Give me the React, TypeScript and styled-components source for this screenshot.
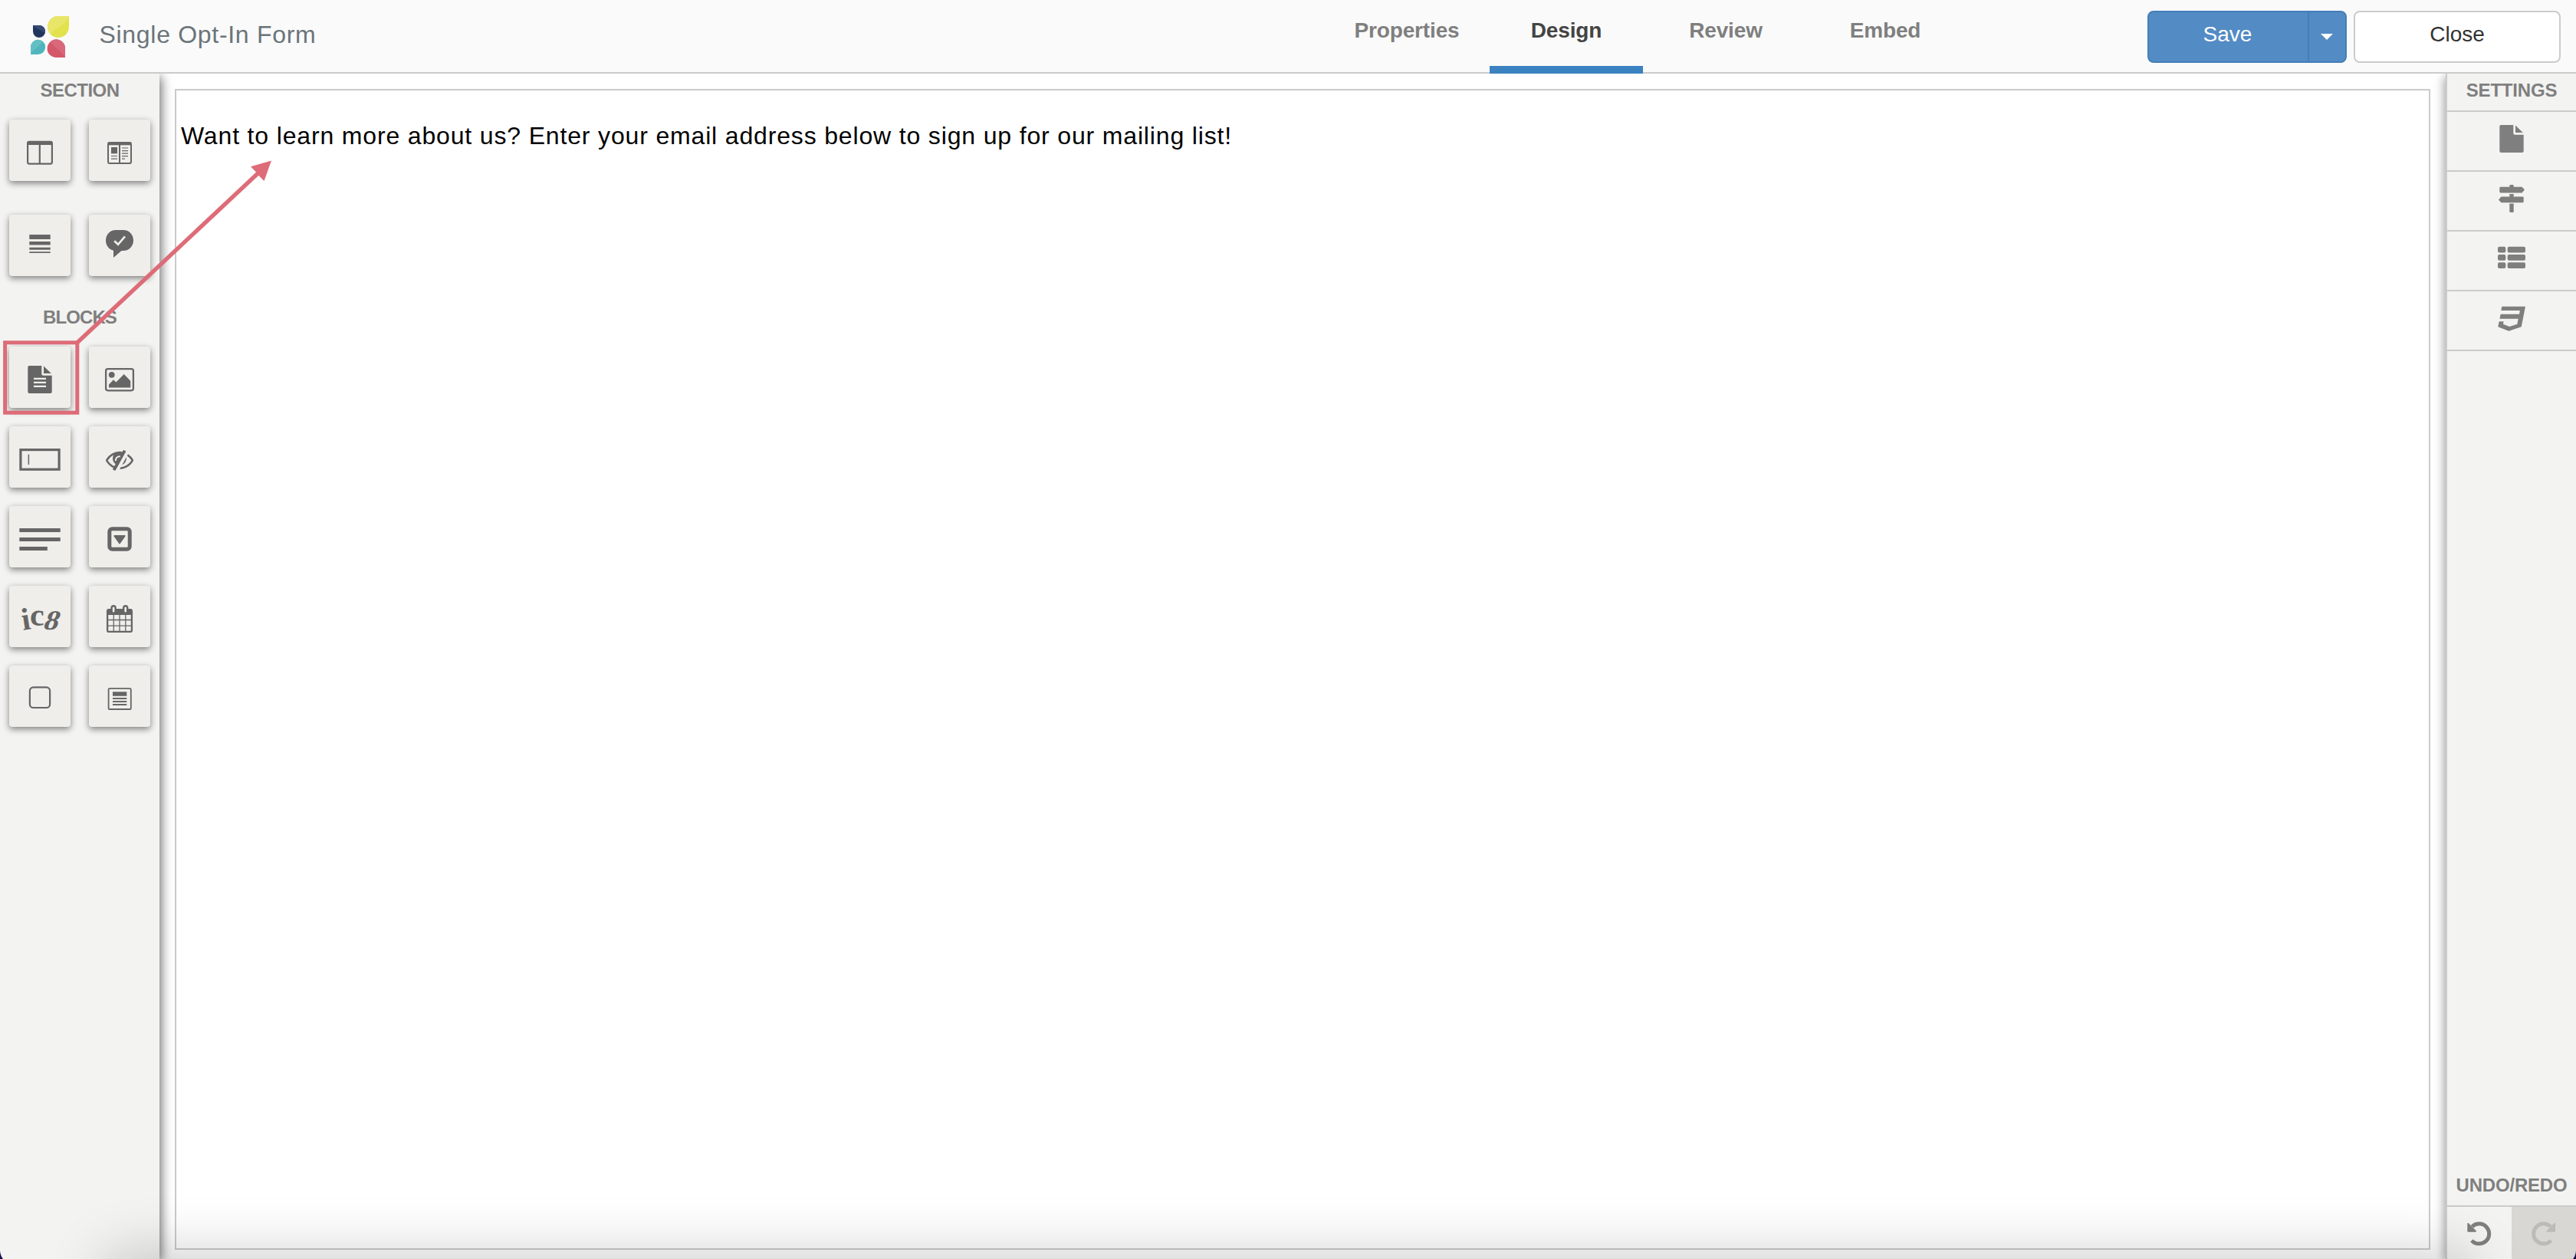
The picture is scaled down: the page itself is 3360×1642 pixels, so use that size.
import React from "react";
import styled, { createGlobalStyle } from "styled-components";

const GlobalStyle = createGlobalStyle`
  * { box-sizing: border-box; }
  html, body { margin: 0; padding: 0; }
  body {
    font-family: "Liberation Sans", Helvetica, Arial, sans-serif;
    background: #fff;
    overflow: hidden;
  }
  button { font-family: inherit; margin: 0; padding: 0; }
`;

const INK = "#666666";
const TILE = "#efeeea";

const Page = styled.div`
  position: relative;
  display: flex;
  flex-direction: column;
  height: 1642px;
  overflow: hidden;
`;

const Header = styled.header`
  display: grid;
  grid-template-columns: 1735px 1fr auto;
  height: 96px;
  flex: none;
  background: #fafafa;
  box-shadow: inset 0 -2px 0 #cbcbcb;
`;

const Brand = styled.div`
  display: flex;
  align-items: flex-start;
  padding: 20px 0 0 38px;
`;

const Title = styled.h1`
  margin: 7px 0 0 37.5px;
  font-size: 32px;
  line-height: 37px;
  font-weight: 400;
  letter-spacing: 0.7px;
  color: #6b7479;
`;

const Tabs = styled.nav`
  display: flex;
  gap: 8px;
`;

const Tab = styled.a<{ $active?: boolean }>`
  width: 200px;
  padding-top: 24px;
  text-align: center;
  font-size: 28px;
  line-height: 32px;
  font-weight: 700;
  letter-spacing: -0.15px;
  color: ${(p) => (p.$active ? "#444444" : "#7f7f7f")};
  border-bottom: 10px solid ${(p) => (p.$active ? "#3a82c0" : "transparent")};
`;

const Actions = styled.div`
  display: flex;
  gap: 9px;
  padding: 14px 20px 0 0;
`;

const SaveGroup = styled.div`
  display: flex;
  width: 260px;
  height: 68px;
  border: 2px solid #457eb9;
  border-radius: 8px;
  background: #538bc4;
  overflow: hidden;
`;

const SaveButton = styled.button`
  width: 207px;
  padding: 0 2px 6px 0;
  border: 0;
  background: transparent;
  color: #fff;
  font-size: 28px;
`;

const SaveMenu = styled.button`
  flex: 1;
  display: flex;
  align-items: center;
  justify-content: center;
  border: 0;
  border-left: 2px solid #457eb9;
  background: transparent;
`;

const Caret = styled.span`
  border: 8px solid transparent;
  border-top-color: #fff;
  border-bottom: 0;
  margin: -1px 2px 0 0;
`;

const CloseButton = styled.button`
  width: 270px;
  height: 68px;
  padding-bottom: 6px;
  border: 2px solid #cbcbcb;
  border-radius: 8px;
  background: #fff;
  color: #333;
  font-size: 28px;
`;

const Body = styled.div`
  display: flex;
  flex: 1;
  min-height: 0;
`;

const Sidebar = styled.aside`
  width: 208px;
  flex: none;
  background: #f3f3f1;
  box-shadow: 2px 4px 14px rgba(0, 0, 0, 0.6);
  clip-path: inset(0 -30px 0 0);
`;

const PanelTitle = styled.h2<{ $top: number; $height: number; $tracking?: number }>`
  margin: 0;
  padding-top: ${(p) => p.$top}px;
  height: ${(p) => p.$height}px;
  text-align: center;
  font-size: 24px;
  line-height: 28px;
  font-weight: 700;
  letter-spacing: ${(p) => p.$tracking ?? -0.2}px;
  white-space: nowrap;
  color: #7f7f7f;
`;

const TileGrid = styled.div<{ $gap: number }>`
  display: grid;
  grid-template-columns: 80px 80px;
  column-gap: 24px;
  row-gap: ${(p) => p.$gap}px;
  padding-left: 12px;
`;

const Tile = styled.button`
  display: block;
  width: 80px;
  height: 80px;
  border: 0;
  border-radius: 4px;
  background: ${TILE};
  box-shadow: 0 3px 8px rgba(0, 0, 0, 0.48);
`;

const Workspace = styled.main`
  flex: 1;
  display: flex;
  padding: 20px 20px 12px;
`;

const FormCanvas = styled.section`
  flex: 1;
  padding: 38px 6px;
  border: 2px solid #cbcbcb;
`;

const Copy = styled.p`
  margin: 0;
  font-size: 32px;
  line-height: 42px;
  letter-spacing: 0.84px;
  color: #000;
`;

const Settings = styled.aside`
  display: flex;
  flex-direction: column;
  width: 170px;
  flex: none;
  background: #f3f3f1;
  border-left: 2px solid #cbcbcb;
  box-shadow: -2px 4px 12px rgba(0, 0, 0, 0.38);
  clip-path: inset(0 0 0 -30px);
`;

const SettingItem = styled.button`
  height: 78px;
  border: 0;
  border-bottom: 2px solid #cbcbcb;
  background: transparent;
  display: flex;
  justify-content: center;
`;

const SettingList = styled.div`
  display: flex;
  flex-direction: column;
  border-top: 2px solid #cbcbcb;
`;

const History = styled.div`
  margin-top: auto;
`;

const HistoryRow = styled.div`
  display: flex;
  border-top: 2px solid #cbcbcb;
`;

const HistoryButton = styled.button<{ $off?: boolean }>`
  width: 84px;
  height: 68px;
  border: 0;
  color: ${(p) => (p.$off ? "#bcbbb8" : "#7f7f7f")};
  background: ${(p) => (p.$off ? "#d8d7d3" : "transparent")};
`;

const Icon = styled.svg`
  display: block;
  flex: none;
`;

const Callout = styled.svg`
  position: absolute;
  left: 0;
  top: 200px;
  pointer-events: none;
`;

const DockShade = styled.div`
  position: absolute;
  left: 140px;
  right: 140px;
  top: 100%;
  height: 100px;
  pointer-events: none;
  box-shadow: 0 0 80px rgba(0, 0, 0, 0.24);
`;

const Corner = styled.span<{ $side: "left" | "right" }>`
  position: absolute;
  bottom: 0;
  ${(p) => p.$side}: 0;
  width: 12px;
  height: 12px;
  background: radial-gradient(
    circle at ${(p) => (p.$side === "left" ? "20px" : "-8px")} 0,
    transparent 19.5px,
    #1a0f52 20.5px
  );
`;

const Logo = () => (
  <Icon width="54" height="58" viewBox="38 20 54 58">
    <path d="M43 33H51A8 8 0 1 1 43 41Z" fill="#21365f" />
    <path d="M43 33H51A8 8 0 0 1 58.5 44C54 38 48 39 43 33Z" fill="#364b72" />
    <path d="M90 21V35A14 14 0 1 1 76 21Z" fill="#e2e24c" />
    <path d="M90 21H76A14 14 0 0 0 66.5 45.2C71 35 84 36 90 21Z" fill="#e8e568" />
    <path d="M40 71V61.5A9.6 9.6 0 1 1 49.6 71Z" fill="#50b5bc" />
    <path d="M40 71V61.5A9.6 9.6 0 0 1 55.5 54C51 62 45 62 40 71Z" fill="#62c0c4" />
    <path d="M85 75V63A11.7 11.7 0 1 0 73.3 75Z" fill="#d35869" />
    <path d="M85 75V63A11.7 11.7 0 0 0 65.5 54.4C71 62 78 64 85 75Z" fill="#d9687a" />
  </Icon>
);

const TileSvg = ({ children }: { children: React.ReactNode }) => (
  <Icon width="80" height="80" viewBox="0 0 80 80" fill={INK}>
    {children}
  </Icon>
);

const PAGE_PATH =
  "M26 25H42.3V35.7Q42.3 37.7 44.3 37.7H55.7V59Q55.7 61 53.7 61H26.3Q24.3 61 24.3 59V27Q24.3 25 26.3 25ZM45 25.5L54.8 35H45Z";

const ColumnsIcon = () => (
  <TileSvg>
    <rect x="24.1" y="28.8" width="31.8" height="28.8" rx="2" fill="none" stroke={INK} strokeWidth="2.2" />
    <rect x="24" y="28" width="32" height="5" />
    <rect x="38.7" y="30" width="2.2" height="27" />
  </TileSvg>
);

const ArticleIcon = () => (
  <TileSvg>
    <rect x="25" y="30" width="30" height="27" rx="2" fill="none" stroke={INK} strokeWidth="2" />
    <rect x="25" y="29.5" width="30" height="3.8" />
    <rect x="39" y="31" width="2" height="26" />
    <rect x="29" y="36" width="8" height="8.3" />
    <path d="M29 47.5h8M29 51.2h8M43 37h8M43 40.6h8M43 44.1h8M43 47.6h8M43 51.2h4" stroke={INK} strokeWidth="1.2" />
  </TileSvg>
);

const DividerIcon = () => (
  <TileSvg>
    <path d="M26.3 26H53.7V32H26.3ZM26.3 35H53.7V39.4H26.3ZM26.3 42.7H53.7V45.7H26.3ZM26.3 48.2H53.7V50H26.3Z" />
  </TileSvg>
);

const BubbleIcon = () => (
  <TileSvg>
    <path d="M35 20H45C52.5 20 58 26 58 33.5S52.5 47 45 47H42.5L32 56V46.7C26 45.5 22 40 22 33.5C22 26 27.5 20 35 20Z" />
    <path d="M33.2 34.2L38 38.8L47 28.3" fill="none" stroke={TILE} strokeWidth="2.6" />
  </TileSvg>
);

const TextIcon = () => (
  <TileSvg>
    <path d={PAGE_PATH} />
    <path d="M32 41.8H48M32 46.8H48M32 51.8H48" stroke={TILE} strokeWidth="2.2" />
  </TileSvg>
);

const ImageIcon = () => (
  <TileSvg>
    <rect x="22.1" y="29.1" width="35.8" height="28.2" rx="2.6" fill="none" stroke={INK} strokeWidth="2.3" />
    <circle cx="29.7" cy="36.8" r="3.9" />
    <path d="M26 53.4V49.5L32 43.3L35.4 46.4L45.7 36L54.2 44.8V53.4Z" />
  </TileSvg>
);

const InputIcon = () => (
  <TileSvg>
    <rect x="14.9" y="30.6" width="50.2" height="25.6" fill="none" stroke={INK} strokeWidth="3.2" />
    <rect x="24.6" y="36.7" width="1.5" height="13.3" />
  </TileSvg>
);

const HiddenIcon = () => (
  <TileSvg>
    <g transform="translate(22 56) scale(0.02009 -0.02009)">
      <path d="M555 201l78 141q-87 63 -136 159t-49 203q0 121 61 225q-229 -117 -381 -353q167 -258 427 -375zM944 832q0 20 -14 34t-34 14q-125 0 -214.5 -89.5t-89.5 -214.5q0 -20 14 -34t34 -14t34 14t14 34q0 86 61 147t147 61q20 0 34 14t14 34zM1307 1151q0 -7 -1 -9q-106 -189 -316 -567t-315 -566l-49 -89q-10 -16 -28 -16q-12 0 -134 70q-16 10 -16 28q0 12 44 87q-143 65 -263.5 173t-208.5 245q-20 31 -20 69t20 69q153 235 380 371t496 136q89 0 180 -17l54 97q10 16 28 16q5 0 18 -6t31 -15.5t33 -18.5t31.5 -18.5t19.5 -11.5q16 -10 16 -27zM1344 704q0 -139 -79 -253.5t-209 -164.5l280 502q8 -45 8 -84zM1792 576q0 -35 -20 -69q-39 -64 -109 -145q-150 -172 -347.5 -267t-419.5 -95l74 132q212 18 392.5 137t301.5 307q-115 179 -282 294l63 112q95 -64 182.5 -153t144.5 -184q20 -34 20 -69z" />
    </g>
  </TileSvg>
);

const TextareaIcon = () => (
  <TileSvg>
    <path d="M13.3 29H66.7V34H13.3ZM13.3 41H66.7V46H13.3ZM13.3 53H49.8V58H13.3Z" />
  </TileSvg>
);

const SelectIcon = () => (
  <TileSvg>
    <rect x="26.8" y="29.8" width="26.4" height="26.4" rx="3.5" fill="none" stroke={INK} strokeWidth="5" />
    <path d="M33.3 39H46.7L40 48.5Z" stroke={INK} strokeWidth="1.8" strokeLinejoin="round" />
  </TileSvg>
);

const CaptchaGlyph = styled.text`
  font-family: "Liberation Serif", serif;
  font-weight: 700;
`;

const CaptchaIcon = () => (
  <TileSvg>
    <CaptchaGlyph transform="translate(18 58) rotate(-9)" fontSize="41">i</CaptchaGlyph>
    <CaptchaGlyph transform="translate(27 52)" fontSize="42">c</CaptchaGlyph>
    <CaptchaGlyph transform="translate(43 57) skewX(-18) scale(1.08 1)" fontSize="36">8</CaptchaGlyph>
  </TileSvg>
);

const CalendarIcon = () => (
  <TileSvg>
    <rect x="24.1" y="31.1" width="31.8" height="28.8" rx="2" fill="none" stroke={INK} strokeWidth="2.3" />
    <rect x="24" y="30.5" width="32" height="7.5" />
    <path d="M32.3 38V60M40 38V60M47.8 38V60M24 44.5H56M24 52.1H56" stroke={INK} strokeWidth="1.3" />
    <rect x="29.6" y="26.2" width="5" height="9.6" rx="2.5" fill={TILE} stroke={INK} strokeWidth="2.4" />
    <rect x="45.2" y="26.2" width="5" height="9.6" rx="2.5" fill={TILE} stroke={INK} strokeWidth="2.4" />
  </TileSvg>
);

const CheckboxIcon = () => (
  <TileSvg>
    <rect x="26.9" y="28.4" width="26.2" height="26.6" rx="4.6" fill="none" stroke={INK} strokeWidth="2.2" />
  </TileSvg>
);

const ListIcon = () => (
  <TileSvg>
    <rect x="25.6" y="29.8" width="29.2" height="27.2" rx="1.6" fill="none" stroke={INK} strokeWidth="1.8" />
    <path d="M31 34.2H49.3V39.7H31ZM31 42H49.3V43.9H31ZM31 46H49.3V47.9H31ZM31 50H49.3V51.9H31Z" />
  </TileSvg>
);

const SettingSvg = ({ children }: { children: React.ReactNode }) => (
  <Icon width="80" height="76" viewBox="0 0 80 76" fill="#7f7f7f">
    {children}
  </Icon>
);

const PageSetting = () => (
  <SettingSvg>
    <path d={PAGE_PATH} transform="translate(0 -8)" />
  </SettingSvg>
);

const SignsSetting = () => (
  <SettingSvg>
    <path d="M37.3 19.8V18.2Q37.3 17 38.5 17H41.5Q42.7 17 42.7 18.2V19.8H53.5L57 23.5L53.5 27.4H25.6Q24.3 27.4 24.3 26V21Q24.3 19.8 25.6 19.8ZM37.3 29H42.7V32.4H54.4Q55.7 32.4 55.7 33.6V39Q55.7 40.3 54.4 40.3H26.4L23 36.4L26.4 32.4H37.3ZM37.3 41.4H42.7V51.8Q42.7 53 41.5 53H38.5Q37.3 53 37.3 51.8Z" />
  </SettingSvg>
);

const FieldsSetting = () => (
  <SettingSvg>
    {[19.7, 30, 40.3].map((y) => (
      <g key={y}>
        <rect x="22" y={y} width="10.3" height="7.7" rx="2" />
        <rect x="34.7" y={y} width="23.3" height="7.7" rx="2" />
      </g>
    ))}
  </SettingSvg>
);

const CssSetting = () => (
  <SettingSvg>
    <path d="M27.3 19.7H58L52.7 46.3L36.3 51.7L22.3 46.3L23.7 39.3H29.7L29 42.7L37.3 46L47.3 42.7L48.7 35.7H24.4L25.7 29.7H50L50.8 25H26.3Z" />
  </SettingSvg>
);

const TurnIcon = ({ flipped }: { flipped?: boolean }) => (
  <Icon width="84" height="68" viewBox="0 0 84 68">
    <g transform={flipped ? "translate(83.4 0) scale(-1 1)" : undefined}>
      <path d="M32 43.8A13 13 0 1 0 32.6 25.8" fill="none" stroke="currentColor" strokeWidth="5" />
      <path d="M27.2 21.9V31.8H37.1Z" fill="currentColor" stroke="currentColor" strokeWidth="1.8" strokeLinejoin="round" />
    </g>
  </Icon>
);

const sectionTiles = [ColumnsIcon, ArticleIcon, DividerIcon, BubbleIcon];
const blockTiles = [
  TextIcon,
  ImageIcon,
  InputIcon,
  HiddenIcon,
  TextareaIcon,
  SelectIcon,
  CaptchaIcon,
  CalendarIcon,
  CheckboxIcon,
  ListIcon,
];
const settingItems = [PageSetting, SignsSetting, FieldsSetting, CssSetting];

export default function App() {
  return (
    <>
      <GlobalStyle />
      <Page>
        <Header>
          <Brand>
            <Logo />
            <Title>Single Opt-In Form</Title>
          </Brand>
          <Tabs>
            <Tab>Properties</Tab>
            <Tab $active>Design</Tab>
            <Tab>Review</Tab>
            <Tab>Embed</Tab>
          </Tabs>
          <Actions>
            <SaveGroup>
              <SaveButton>Save</SaveButton>
              <SaveMenu>
                <Caret />
              </SaveMenu>
            </SaveGroup>
            <CloseButton>Close</CloseButton>
          </Actions>
        </Header>
        <Body>
          <Sidebar>
            <PanelTitle $top={8} $height={60} $tracking={-0.5}>SECTION</PanelTitle>
            <TileGrid $gap={44}>
              {sectionTiles.map((Glyph, i) => (
                <Tile key={i}>
                  <Glyph />
                </Tile>
              ))}
            </TileGrid>
            <PanelTitle $top={40} $height={92} $tracking={-0.9}>BLOCKS</PanelTitle>
            <TileGrid $gap={24}>
              {blockTiles.map((Glyph, i) => (
                <Tile key={i}>
                  <Glyph />
                </Tile>
              ))}
            </TileGrid>
          </Sidebar>
          <Workspace>
            <FormCanvas>
              <Copy>
                Want to learn more about us? Enter your email address below to sign up for our mailing list!
              </Copy>
            </FormCanvas>
          </Workspace>
          <Settings>
            <PanelTitle $top={8} $height={48}>SETTINGS</PanelTitle>
            <SettingList>
              {settingItems.map((Glyph, i) => (
                <SettingItem key={i}>
                  <Glyph />
                </SettingItem>
              ))}
            </SettingList>
            <History>
              <PanelTitle $top={0} $height={40}>UNDO/REDO</PanelTitle>
              <HistoryRow>
                <HistoryButton>
                  <TurnIcon />
                </HistoryButton>
                <HistoryButton $off>
                  <TurnIcon flipped />
                </HistoryButton>
              </HistoryRow>
            </History>
          </Settings>
        </Body>
        <Callout width="360" height="345" viewBox="0 200 360 345">
          <rect x="6.6" y="446.8" width="94.2" height="91.4" fill="none" stroke="#dd6c78" strokeWidth="5" />
          <path d="M99 448.5L337 225.5" stroke="#dd6c78" strokeWidth="5.4" />
          <path d="M354 209.6L327 217.3L334.5 225L337 228.5L344.5 236Z" fill="#dd6c78" />
        </Callout>
        <DockShade />
        <Corner $side="left" />
        <Corner $side="right" />
      </Page>
    </>
  );
}
